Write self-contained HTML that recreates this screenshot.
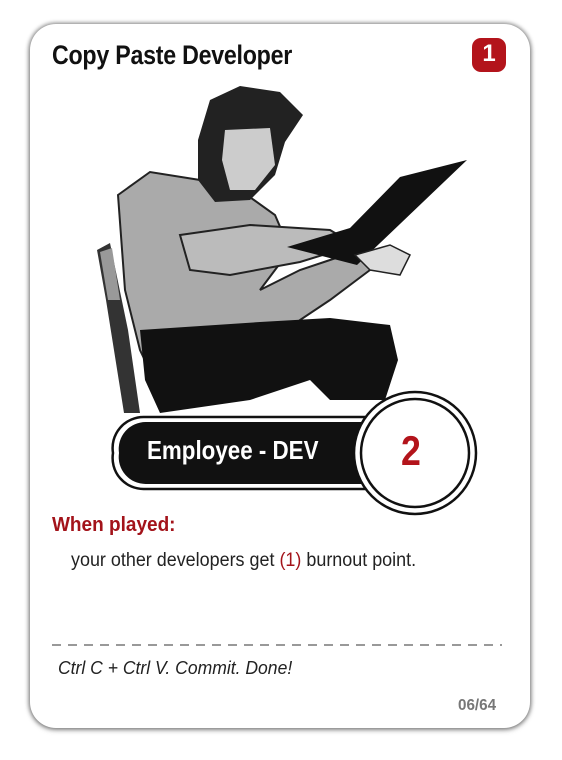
<!DOCTYPE html>
<html><head><style>
html,body{margin:0;padding:0;background:#fff;width:562px;height:760px;overflow:hidden}
.card{position:absolute;left:30px;top:24px;width:500px;height:704px;border-radius:26px;background:#fff;box-shadow:0 0 4px 1px rgba(0,0,0,.45),0 2px 6px rgba(0,0,0,.25)}
.n{font-family:"Liberation Sans Narrow","Liberation Sans",sans-serif;position:absolute;white-space:nowrap;transform-origin:0 0}
</style></head><body>
<div class="card"></div>
<div class="n" style="left:52px;top:40px;font-size:27px;font-weight:bold;color:#111;letter-spacing:-0.3px;transform:scaleX(0.86)">Copy Paste Developer</div>
<div style="position:absolute;left:472px;top:38px;width:34px;height:34px;border-radius:9px;background:#b3141b"></div>
<div class="n" style="left:472px;top:40px;width:34px;text-align:center;font-size:24px;font-weight:bold;color:#fff">1</div>
<svg style="position:absolute;left:0;top:0" width="562" height="760">
<polygon points="97,250 110,243 128,330 140,413 124,413 106,300" fill="#333"/>
<polygon points="100,252 112,248 120,300 108,300" fill="#999"/>
<path d="M118,195 L150,172 L200,180 L240,190 L275,215 L290,250 L260,290 L300,270 L330,260 L360,250 L370,270 L330,300 L300,320 L270,350 L240,380 L160,392 L140,350 L125,290 Z" fill="#aaa" stroke="#222" stroke-width="2"/>
<path d="M180,235 L250,225 L330,230 L355,245 L300,262 L230,275 L190,270 Z" fill="#bbb" stroke="#222" stroke-width="2"/>
<path d="M140,330 L260,322 L330,318 L390,325 L398,360 L385,400 L330,400 L310,380 L250,400 L160,413 L145,380 Z" fill="#111"/>
<path d="M210,100 L240,86 L280,92 L303,115 L285,142 L275,175 L250,200 L215,202 L198,180 L198,140 Z" fill="#222"/>
<path d="M225,130 L270,128 L275,165 L255,190 L230,190 L222,160 Z" fill="#ccc"/>
<polygon points="287,247 357,265 467,160 400,177 350,228" fill="#111"/>
<path d="M355,255 L390,245 L410,255 L400,275 L370,270 Z" fill="#ddd" stroke="#222" stroke-width="1.5"/>
<path d="M113,453 A31,31 0 0 1 144,417 L380,417 L380,489 L144,489 A31,31 0 0 1 113,453 Z" fill="#fff" stroke="#111" stroke-width="2.5"/>
<path d="M119,453 A27,27 0 0 1 146,422 L380,422 L380,484 L146,484 A27,27 0 0 1 119,453 Z" fill="#111"/>
<circle cx="415" cy="453" r="61" fill="#fff" stroke="#111" stroke-width="2.5"/>
<circle cx="415" cy="453" r="54" fill="#fff" stroke="#111" stroke-width="2.5"/>
<line x1="52" y1="645" x2="502" y2="645" stroke="#999" stroke-width="2" stroke-dasharray="9,7"/>
</svg>
<div class="n" style="left:147px;top:435px;font-size:26px;font-weight:bold;color:#fff;transform:scaleX(0.86)">Employee - DEV</div>
<div class="n" style="left:401px;top:427px;font-size:42px;font-weight:bold;color:#b3141b;transform:scaleX(0.85)">2</div>
<div class="n" style="left:52px;top:514px;font-size:20px;font-weight:bold;color:#a3131a;transform:scaleX(0.95)">When played:</div>
<div class="n" style="left:71px;top:549px;font-size:19.5px;color:#222;transform:scaleX(0.92)">your other developers get <span style="color:#a3131a">(1)</span> burnout point.</div>
<div class="n" style="left:58px;top:658px;font-size:18px;font-style:italic;color:#222;transform:scaleX(0.975)">Ctrl C + Ctrl V. Commit. Done!</div>
<div class="n" style="left:458px;top:697px;font-size:16px;font-weight:bold;color:#777;transform:scaleX(0.95)">06/64</div>
</body></html>
